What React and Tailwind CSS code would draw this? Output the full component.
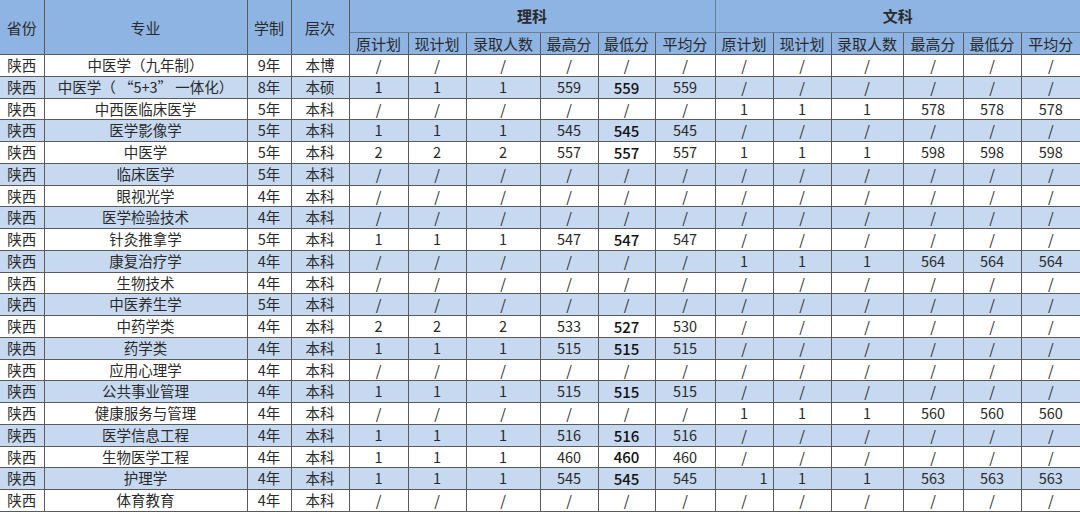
import React from "react";

const S = ["/", "/", "/", "/", "/", "/"];
const rows = [
  ["中医学（九年制）", "9年", "本博", S, S],
  ["中医学（ “5+3” 一体化）", "8年", "本硕", ["1", "1", "1", "559", "559", "559"], S],
  ["中西医临床医学", "5年", "本科", S, ["1", "1", "1", "578", "578", "578"]],
  ["医学影像学", "5年", "本科", ["1", "1", "1", "545", "545", "545"], S],
  ["中医学", "5年", "本科", ["2", "2", "2", "557", "557", "557"], ["1", "1", "1", "598", "598", "598"]],
  ["临床医学", "5年", "本科", S, S],
  ["眼视光学", "4年", "本科", S, S],
  ["医学检验技术", "4年", "本科", S, S],
  ["针灸推拿学", "5年", "本科", ["1", "1", "1", "547", "547", "547"], S],
  ["康复治疗学", "4年", "本科", S, ["1", "1", "1", "564", "564", "564"]],
  ["生物技术", "4年", "本科", S, S],
  ["中医养生学", "5年", "本科", S, S],
  ["中药学类", "4年", "本科", ["2", "2", "2", "533", "527", "530"], S],
  ["药学类", "4年", "本科", ["1", "1", "1", "515", "515", "515"], S],
  ["应用心理学", "4年", "本科", S, S],
  ["公共事业管理", "4年", "本科", ["1", "1", "1", "515", "515", "515"], S],
  ["健康服务与管理", "4年", "本科", S, ["1", "1", "1", "560", "560", "560"]],
  ["医学信息工程", "4年", "本科", ["1", "1", "1", "516", "516", "516"], S],
  ["生物医学工程", "4年", "本科", ["1", "1", "1", "460", "460", "460"], S],
  ["护理学", "4年", "本科", ["1", "1", "1", "545", "545", "545"], ["1", "1", "1", "563", "563", "563"]],
  ["体育教育", "4年", "本科", S, S],
];

const widths = [44, 203, 44, 58, 59, 58, 74, 58, 57, 60, 58, 58, 72, 60, 58, 59];
const subs = ["原计划", "现计划", "录取人数", "最高分", "最低分", "平均分"];

export default function App() {
  return (
    <div
      className="w-[1080px] h-[512px] overflow-hidden bg-white text-[#2a2a2a]"
      style={{ fontFamily: '"Noto Sans CJK SC", "Noto Sans", sans-serif' }}
    >
      <table className="table-fixed border-collapse w-[1080px] text-[14.5px] leading-none">
        <colgroup>
          {widths.map((w, i) => (
            <col key={i} style={{ width: w }} />
          ))}
        </colgroup>
        <thead>
          <tr className="h-[32px] bg-[#8eb4e3] text-[15px]">
            <th rowSpan={2} className="font-normal border-r border-b border-[#5a5a5a] text-center">省份</th>
            <th rowSpan={2} className="font-normal border-r border-b border-[#5a5a5a] text-center">专业</th>
            <th rowSpan={2} className="font-normal border-r border-b border-[#5a5a5a] text-center">学制</th>
            <th rowSpan={2} className="font-normal border-r border-b border-[#5a5a5a] text-center">层次</th>
            <th colSpan={6} className="font-bold border-r border-b border-[#6b7f99] text-center">理科</th>
            <th colSpan={6} className="font-bold border-b border-[#6b7f99] text-center">文科</th>
          </tr>
          <tr className="h-[22.5px] bg-[#8eb4e3] text-[15px]">
            {[...subs, ...subs].map((s, i) => (
              <th
                key={i}
                className={`font-normal whitespace-nowrap border-b border-[#5a5a5a] text-center ${i === 11 ? "" : "border-r"}`}
              >
                {s}
              </th>
            ))}
          </tr>
        </thead>
        <tbody>
          {rows.map((r, ri) => {
            const blue = ri % 2 === 1;
            return (
              <tr key={ri} className={`h-[21.76px] ${blue ? "bg-[#c6d9f1]" : "bg-white"}`}>
                <td className="border-r border-b border-[#5a5a5a] text-center">陕西</td>
                <td className="border-r border-b border-[#5a5a5a] text-center whitespace-nowrap">{r[0]}</td>
                <td className="border-r border-b border-[#5a5a5a] text-center">{r[1]}</td>
                <td className="border-r border-b border-[#5a5a5a] text-center">{r[2]}</td>
                {r[3].map((v, i) => (
                  <td
                    key={"l" + i}
                    className={`border-r border-b border-[#5a5a5a] text-center ${i === 4 && v !== "/" ? "font-medium text-[15px] text-[#111]" : ""}`}
                  >
                    {v}
                  </td>
                ))}
                {r[4].map((v, i) => (
                  <td
                    key={"w" + i}
                    className={`border-b border-[#5a5a5a] ${i === 5 ? "" : "border-r"} ${ri === 19 && i === 0 ? "text-right pr-[5px]" : "text-center"}`}
                  >
                    {v}
                  </td>
                ))}
              </tr>
            );
          })}
        </tbody>
      </table>
    </div>
  );
}
